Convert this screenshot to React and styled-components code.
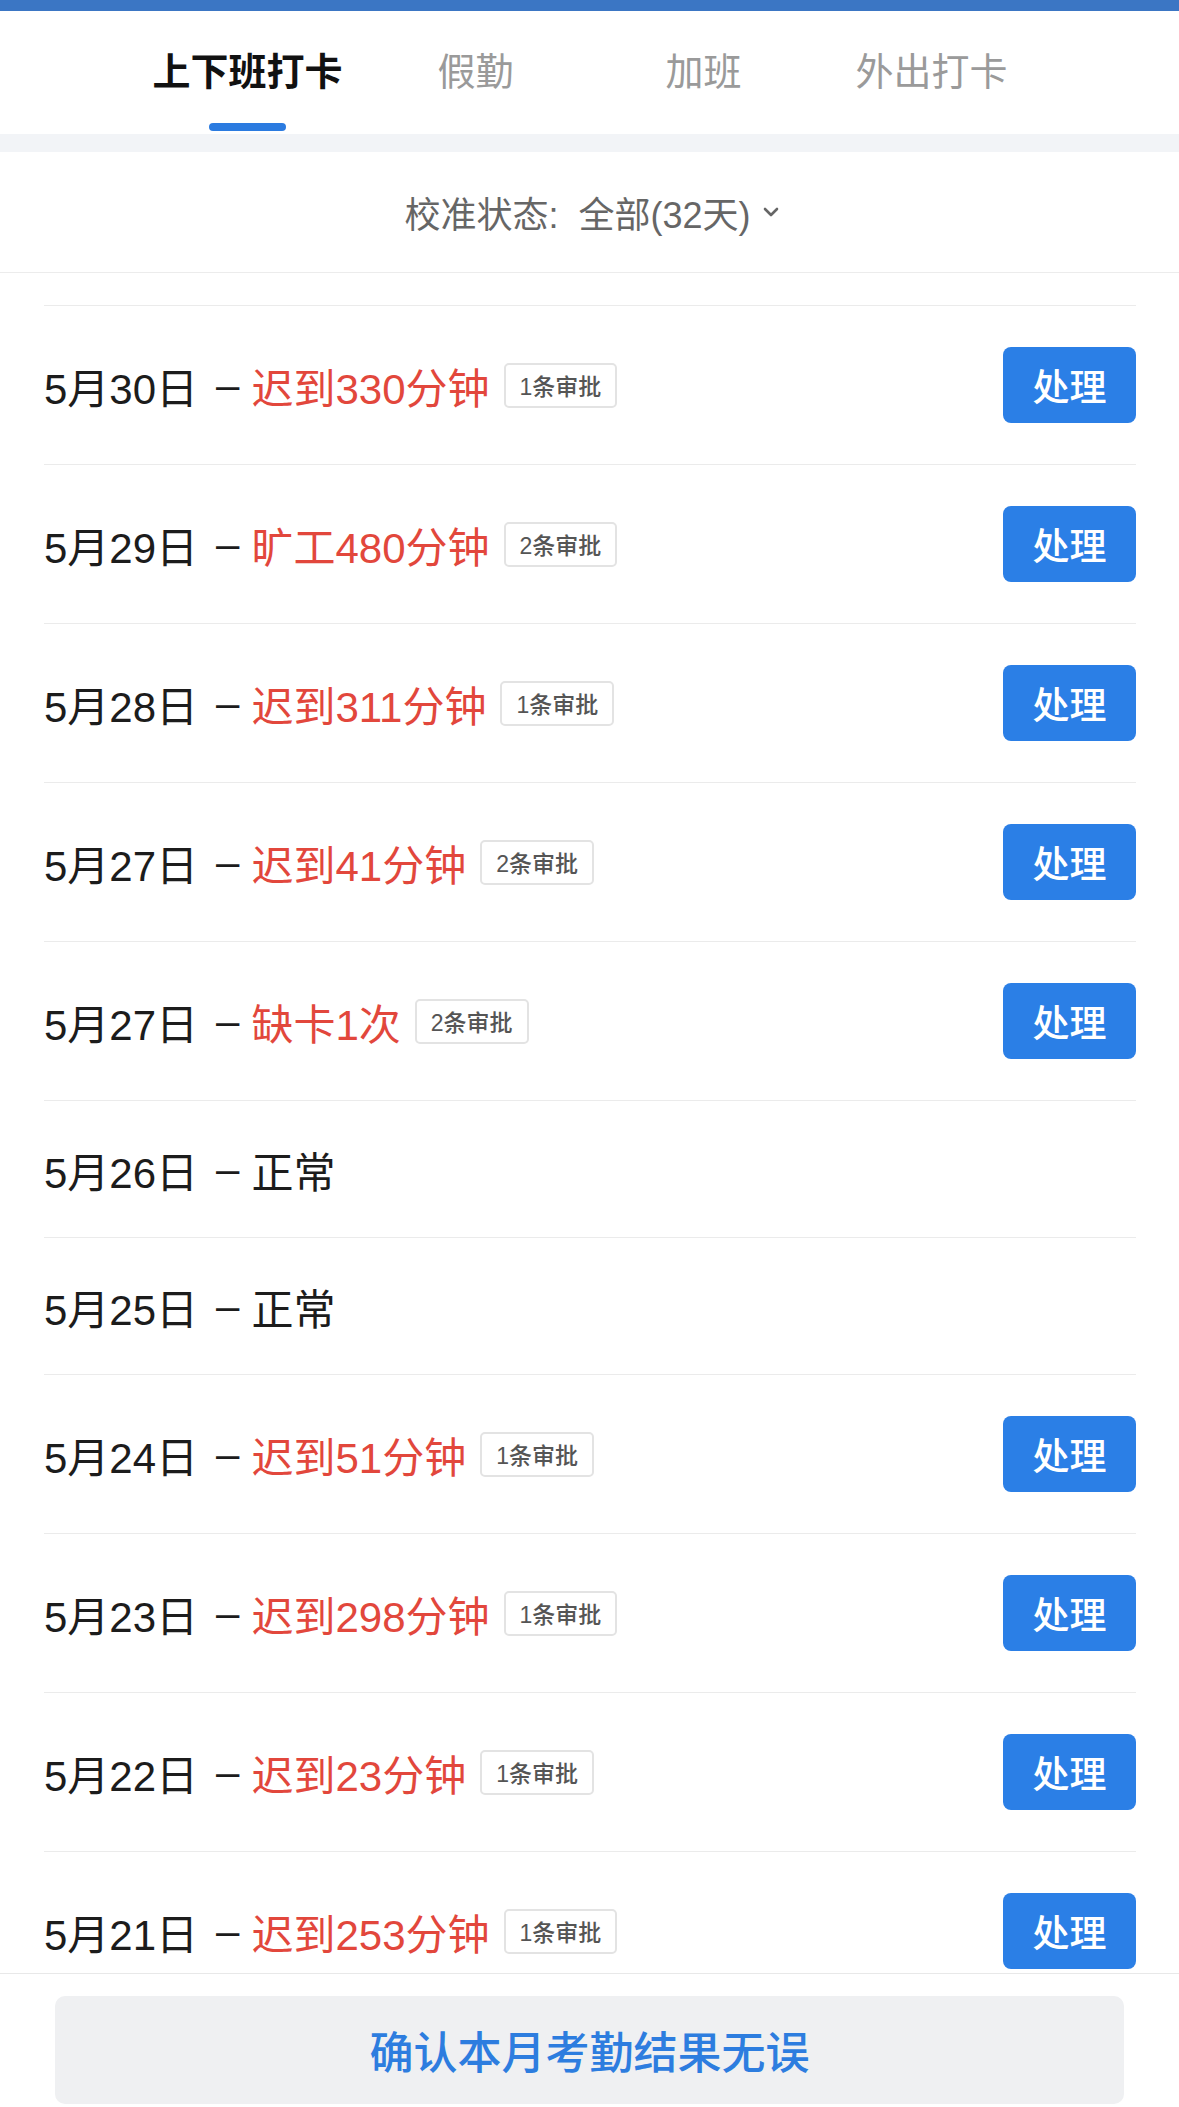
import React from 'react';
import styled, { createGlobalStyle } from 'styled-components';

const GlobalStyle = createGlobalStyle`
  html, body {
    margin: 0;
    padding: 0;
    background: #fff;
  }
  body {
    font-family: 'Liberation Sans', 'Noto Sans CJK SC', sans-serif;
    -webkit-font-smoothing: antialiased;
  }
`;

const tabs = ['上下班打卡', '假勤', '加班', '外出打卡'];

const records = [
  { date: '5月30日', status: '迟到330分钟', approvals: 1 },
  { date: '5月29日', status: '旷工480分钟', approvals: 2 },
  { date: '5月28日', status: '迟到311分钟', approvals: 1 },
  { date: '5月27日', status: '迟到41分钟', approvals: 2 },
  { date: '5月27日', status: '缺卡1次', approvals: 2 },
  { date: '5月26日', status: '正常' },
  { date: '5月25日', status: '正常' },
  { date: '5月24日', status: '迟到51分钟', approvals: 1 },
  { date: '5月23日', status: '迟到298分钟', approvals: 1 },
  { date: '5月22日', status: '迟到23分钟', approvals: 1 },
  { date: '5月21日', status: '迟到253分钟', approvals: 1 },
];

const Chevron = () => (
  <svg width="20" height="14" viewBox="0 0 20 14">
    <polyline
      points="4,4 10,10 16,4"
      fill="none"
      stroke="#666"
      strokeWidth="2.6"
      strokeLinecap="round"
      strokeLinejoin="round"
    />
  </svg>
);

const App = () => {
  return (
    <Page>
      <GlobalStyle />
      <TopStrip />
      <TabBar>
        {tabs.map((t, i) => (
          <Tab key={t}>
            <TabLabel $active={i === 0}>{t}</TabLabel>
            <Indicator $active={i === 0} />
          </Tab>
        ))}
      </TabBar>
      <Band />
      <FilterRow>
        <span>校准状态:&nbsp;&nbsp;全部(32天)</span>
        <Chevron />
      </FilterRow>
      <List>
        {records.map((r, i) => {
          const normal = !r.approvals;
          return (
            <Row key={i} $tall={!normal}>
              <Info>
                <DateText>{r.date}</DateText>
                <Dash>–</Dash>
                <Status $normal={normal}>{r.status}</Status>
                {!normal && <Tag>{r.approvals}条审批</Tag>}
              </Info>
              {!normal && <HandleButton>处理</HandleButton>}
            </Row>
          );
        })}
      </List>
      <Footer>
        <ConfirmButton>确认本月考勤结果无误</ConfirmButton>
      </Footer>
    </Page>
  );
};

export default App;

const Page = styled.div`
  width: 1179px;
  height: 2107px;
  display: flex;
  flex-direction: column;
  overflow: hidden;
  background: #fff;
`;

const TopStrip = styled.div`
  height: 11px;
  background: #3b76c4;
  flex-shrink: 0;
`;

const TabBar = styled.div`
  width: 912px;
  margin: 0 auto;
  display: grid;
  grid-template-columns: repeat(4, 1fr);
  height: 123px;
  flex-shrink: 0;
`;

const Tab = styled.div`
  display: flex;
  flex-direction: column;
  align-items: center;
  padding-top: 39px;
`;

const TabLabel = styled.div`
  font-size: 38px;
  line-height: 44px;
  color: ${(p) => (p.$active ? '#111' : '#9a9a9a')};
  font-weight: ${(p) => (p.$active ? 600 : 400)};
`;

const Indicator = styled.div`
  margin-top: 29px;
  width: 77px;
  height: 8px;
  border-radius: 4px;
  background: ${(p) => (p.$active ? '#2b7be0' : 'transparent')};
`;

const Band = styled.div`
  height: 18px;
  background: #f2f4f7;
  flex-shrink: 0;
`;

const FilterRow = styled.div`
  height: 120px;
  flex-shrink: 0;
  display: flex;
  align-items: center;
  justify-content: center;
  gap: 10px;
  border-bottom: 1px solid #ececec;
  font-size: 36px;
  color: #666;

  span {
    margin-left: 6px;
  }
`;

const List = styled.div`
  flex: 1;
  overflow: hidden;
  padding: 32px 43px 0 44px;
`;

const Row = styled.div`
  box-sizing: border-box;
  height: ${(p) => (p.$tall ? '159px' : '137px')};
  border-top: 1px solid #ebebeb;
  display: flex;
  align-items: center;
  justify-content: space-between;
`;

const Info = styled.div`
  display: flex;
  align-items: center;
  font-size: 42px;
`;

const DateText = styled.span`
  color: #1c1c1c;
`;

const Dash = styled.span`
  color: #1c1c1c;
  margin: 0 12px 0 18px;
`;

const Status = styled.span`
  color: ${(p) => (p.$normal ? '#1c1c1c' : '#e2473c')};
`;

const Tag = styled.span`
  margin-left: 14px;
  box-sizing: border-box;
  height: 45px;
  padding: 0 14px;
  display: inline-flex;
  align-items: center;
  border: 2px solid #e3e3e3;
  border-radius: 5px;
  font-size: 23px;
  font-weight: 500;
  color: #555;
`;

const HandleButton = styled.button`
  width: 133px;
  height: 76px;
  border: none;
  border-radius: 8px;
  background: #2b7fe6;
  color: #fff;
  font-family: inherit;
  font-size: 37px;
  font-weight: 500;
  padding: 0;
`;

const Footer = styled.div`
  flex-shrink: 0;
  height: 134px;
  box-sizing: border-box;
  border-top: 1px solid #e8e8e8;
  padding: 22px 55px 0;
  background: #fff;
`;

const ConfirmButton = styled.button`
  width: 100%;
  height: 108px;
  border: none;
  border-radius: 10px;
  background: #eff0f2;
  color: #2d7ddf;
  font-family: inherit;
  font-size: 44px;
  font-weight: 500;
`;
